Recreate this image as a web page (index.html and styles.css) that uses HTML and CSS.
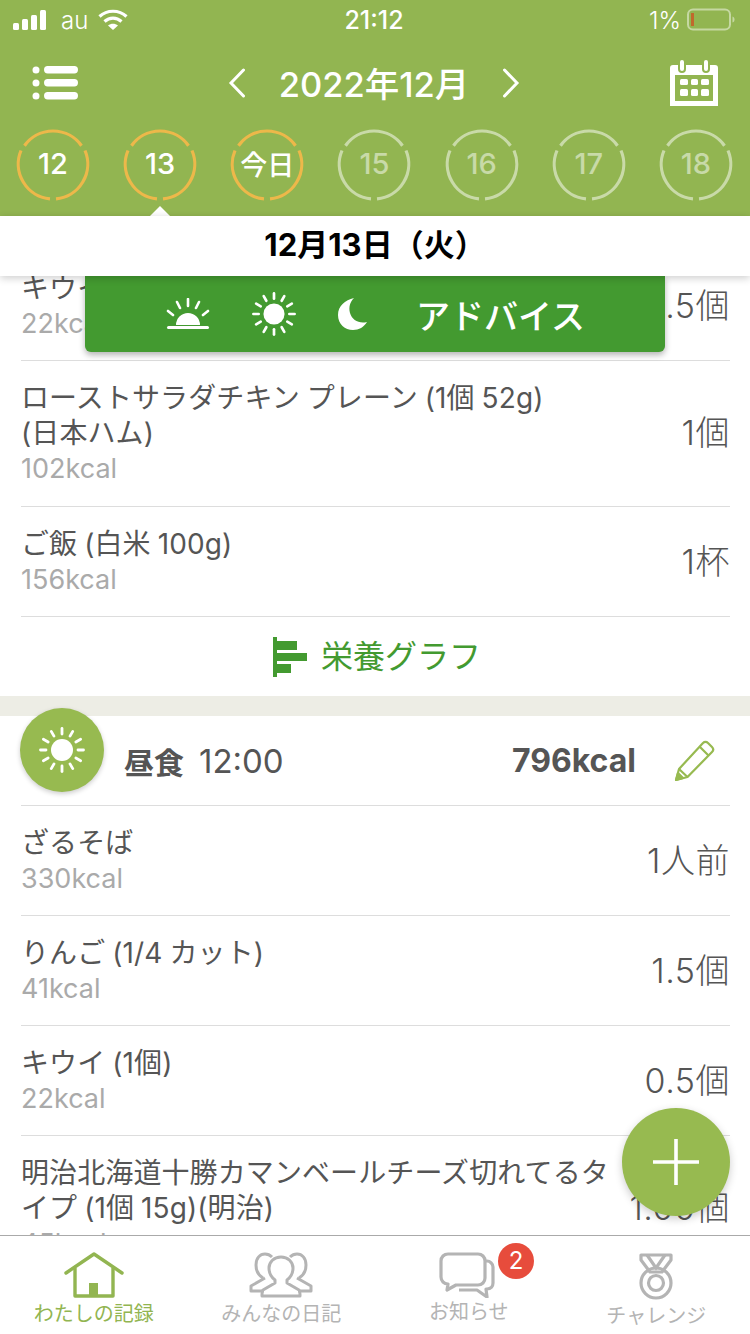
FILE: index.html
```html
<!DOCTYPE html>
<html lang="ja">
<head>
    <meta charset="UTF-8">
    <title>わたしの記録</title>
    <link rel="stylesheet" href="styles.css">
</head>
<body>
    <svg class="defs" width="0" height="0">
        <symbol id="ring" viewBox="0 0 76 76">
            <g fill="none" stroke="currentColor" stroke-width="3.200" stroke-linecap="butt">
                <path d="M41 72.900A35 35 0 0 0 70 24.500"/>
                <path d="M66.500 19.700A35 35 0 0 0 9.500 19.700"/>
                <path d="M6 24.500A35 35 0 0 0 35 72.900"/>
            </g>
        </symbol>
        <symbol id="sun" viewBox="0 0 48 48">
            <circle cx="24" cy="24" r="11" fill="currentColor"/>
            <g stroke="currentColor" stroke-width="2.800" stroke-linecap="round">
                <path d="M24 2.500V8"/>
                <path d="M24 2.500V8" transform="rotate(30 24 24)"/>
                <path d="M24 2.500V8" transform="rotate(60 24 24)"/>
                <path d="M24 2.500V8" transform="rotate(90 24 24)"/>
                <path d="M24 2.500V8" transform="rotate(120 24 24)"/>
                <path d="M24 2.500V8" transform="rotate(150 24 24)"/>
                <path d="M24 2.500V8" transform="rotate(180 24 24)"/>
                <path d="M24 2.500V8" transform="rotate(210 24 24)"/>
                <path d="M24 2.500V8" transform="rotate(240 24 24)"/>
                <path d="M24 2.500V8" transform="rotate(270 24 24)"/>
                <path d="M24 2.500V8" transform="rotate(300 24 24)"/>
                <path d="M24 2.500V8" transform="rotate(330 24 24)"/>
            </g>
        </symbol>
    </svg>

    <div class="page">
        <header class="top">
            <div class="status">
                <div class="status-left">
                    <svg class="signal" width="33" height="20" viewBox="0 0 33 20" fill="#fff">
                        <rect x="0" y="13" width="6" height="7" rx="1.500"/>
                        <rect x="9" y="9" width="6" height="11" rx="1.500"/>
                        <rect x="18" y="5" width="6" height="15" rx="1.500"/>
                        <rect x="27" y="0" width="6" height="20" rx="1.500"/>
                    </svg>
                    <span class="carrier">au</span>
                    <svg class="wifi" width="30" height="22" viewBox="0 0 30 22" fill="none" stroke="#fff" stroke-width="3.200">
                        <path d="M1.500 7.500C9 .5 21 .5 28.500 7.500"/>
                        <path d="M6.500 12.500c5-4.500 12-4.500 17 0"/>
                        <path d="M15 21l-5-4.600c3-2.300 7-2.300 10 0z" fill="#fff" stroke="none"/>
                    </svg>
                </div>
                <span class="clock">21:12</span>
                <div class="status-right">
                    <span>1%</span>
                    <svg width="48" height="24" viewBox="0 0 48 24" fill="none">
                        <rect x="1" y="1.500" width="42" height="20" rx="5" stroke="#c5d8a2" stroke-width="2"/>
                        <rect x="4" y="5" width="3" height="13" fill="#c0692c"/>
                        <path d="M45.500 8.500c1.500.5 2 1.500 2 3s-.5 2.500-2 3z" fill="#c5d8a2"/>
                    </svg>
                </div>
            </div>

            <div class="month-row">
                <svg class="menu" width="46" height="36" viewBox="0 0 46 36" fill="#fff">
                    <circle cx="4" cy="5" r="3.500"/>
                    <circle cx="4" cy="18" r="3.500"/>
                    <circle cx="4" cy="31" r="3.500"/>
                    <rect x="12" y="1" width="34" height="7.500" rx="3.700"/>
                    <rect x="12" y="14" width="34" height="7.500" rx="3.700"/>
                    <rect x="12" y="27" width="34" height="7.500" rx="3.700"/>
                </svg>
                <div class="month">
                    <svg width="18" height="30" viewBox="0 0 18 30" fill="none" stroke="#fff" stroke-width="3" stroke-linecap="round"><path d="M15.500 2L3 15l12.500 13"/></svg>
                    <span class="month-label">2022年12月</span>
                    <svg width="18" height="30" viewBox="0 0 18 30" fill="none" stroke="#fff" stroke-width="3" stroke-linecap="round"><path d="M2.500 2L15 15 2.500 28"/></svg>
                </div>
                <svg class="cal" width="48" height="46" viewBox="0 0 48 46" fill="#fff">
                    <path d="M3 5h5v4a4 4 0 0 0 8 0V5h16v4a4 4 0 0 0 8 0V5h5a3 3 0 0 1 3 3v38H0V8a3 3 0 0 1 3-3zM5 15v26h38V15z" fill-rule="evenodd"/>
                    <rect x="10" y="0" width="4" height="11" rx="2"/>
                    <rect x="34" y="0" width="4" height="11" rx="2"/>
                    <rect x="10" y="19" width="8" height="6" rx="1.500"/>
                    <rect x="21" y="19" width="7" height="6" rx="1.500"/>
                    <rect x="31" y="19" width="8" height="6" rx="1.500"/>
                    <rect x="10" y="29" width="8" height="7" rx="1.500"/>
                    <rect x="21" y="29" width="7" height="7" rx="1.500"/>
                    <rect x="31" y="29" width="8" height="7" rx="1.500"/>
                </svg>
            </div>

            <div class="days">
                <div class="day on"><svg class="ring"><use href="#ring"/></svg><span>12</span></div>
                <div class="day on current"><svg class="ring"><use href="#ring"/></svg><span>13</span></div>
                <div class="day on"><svg class="ring"><use href="#ring"/></svg><span class="today">今日</span></div>
                <div class="day"><svg class="ring"><use href="#ring"/></svg><span>15</span></div>
                <div class="day"><svg class="ring"><use href="#ring"/></svg><span>16</span></div>
                <div class="day"><svg class="ring"><use href="#ring"/></svg><span>17</span></div>
                <div class="day"><svg class="ring"><use href="#ring"/></svg><span>18</span></div>
            </div>
        </header>

        <div class="date-bar">12月13日（火）</div>

        <main class="scroll">
            <div class="advice">
                <svg width="46" height="32" viewBox="0 0 46 32" fill="#fff">
                    <path d="M11 27a12 12 0 0 1 24 0z"/>
                    <rect x="2" y="28" width="42" height="3" rx="1.500"/>
                    <g stroke="#fff" stroke-width="2.600" stroke-linecap="round">
                        <path d="M23 1v7M12 4l3 6M34 4l-3 6M3 13l5 4M43 13l-5 4"/>
                    </g>
                </svg>
                <svg class="advice-sun"><use href="#sun"/></svg>
                <svg width="32" height="34" viewBox="0 0 32 34" fill="#fff">
                    <path d="M17 1C8 3 1 9 1 18c0 9 7 15 15 15 6 0 11-3 14-8-8 2-15-2-17-9-1.500-6 0-11 4-15z"/>
                </svg>
                <span class="advice-label">アドバイス</span>
            </div>

            <div class="list list-top">
                <div class="row">
                    <div><div class="name">キウイ (1個)</div><div class="kcal">22kcal</div></div>
                    <div class="qty">0.5個</div>
                </div>
                <div class="row tall">
                    <div><div class="name">ローストサラダチキン プレーン (1個 52g)<br>(日本ハム)</div><div class="kcal">102kcal</div></div>
                    <div class="qty">1個</div>
                </div>
                <div class="row">
                    <div><div class="name">ご飯 (白米 100g)</div><div class="kcal">156kcal</div></div>
                    <div class="qty">1杯</div>
                </div>
                <div class="graph-link">
                    <svg width="34" height="40" viewBox="0 0 34 40" fill="#439a30">
                        <rect x="0" y="0" width="4" height="40"/>
                        <rect x="4" y="4" width="20" height="9"/>
                        <rect x="4" y="16" width="30" height="8"/>
                        <rect x="4" y="27" width="14" height="9"/>
                    </svg>
                    <span>栄養グラフ</span>
                </div>
            </div>

            <div class="band"></div>

            <section class="meal">
                <div class="meal-icon"><svg class="meal-sun"><use href="#sun"/></svg></div>
                <div class="meal-head">
                    <div class="meal-title"><b>昼食</b><span>12:00</span></div>
                    <div class="meal-total">
                        <b>796kcal</b>
                        <svg width="42" height="42" viewBox="0 0 42 42" fill="none" stroke="#97ba50" stroke-width="2.200" stroke-linejoin="round">
                            <path d="M2 40l3-11L29 3c1.500-1.500 3.500-1.500 5 0l4 4c1.500 1.500 1.500 3.500 0 5L13.500 37z"/>
                            <path d="M5 29l8.500 8M25.500 6.500l9 9"/>
                            <path d="M2 40l2-7 5 5z" fill="#97ba50"/>
                        </svg>
                    </div>
                </div>
                <div class="list">
                    <div class="row">
                        <div><div class="name">ざるそば</div><div class="kcal">330kcal</div></div>
                        <div class="qty">1人前</div>
                    </div>
                    <div class="row">
                        <div><div class="name">りんご (1/4 カット)</div><div class="kcal">41kcal</div></div>
                        <div class="qty">1.5個</div>
                    </div>
                    <div class="row">
                        <div><div class="name">キウイ (1個)</div><div class="kcal">22kcal</div></div>
                        <div class="qty">0.5個</div>
                    </div>
                    <div class="row tall">
                        <div><div class="name">明治北海道十勝カマンベールチーズ切れてるタ<br>イプ (1個 15g)(明治)</div><div class="kcal">45kcal</div></div>
                        <div class="qty">1.00個</div>
                    </div>
                </div>
            </section>
        </main>

        <nav class="tabs">
            <div class="tab active">
                <svg width="60" height="46" viewBox="0 0 60 46" fill="none" stroke="#92b551" stroke-width="3.400" stroke-linejoin="round">
                    <path d="M2 21L30 2l28 19" stroke-linecap="round"/>
                    <path d="M11 16v28h38V16"/>
                    <rect x="25" y="31" width="9" height="13" fill="#92b551" stroke="none"/>
                </svg>
                <span>わたしの記録</span>
            </div>
            <div class="tab">
                <svg width="64" height="46" viewBox="0 0 64 46" fill="none" stroke="#b4b4b4" stroke-width="3" stroke-linejoin="round">
                    <path d="M14 26c-5-3-7-8-7-13C7 6 11 2 16 2c3 0 5 1 7 3"/>
                    <path d="M16 26L2 34v5h13"/>
                    <path d="M50 26c5-3 7-8 7-13 0-7-4-11-9-11-3 0-5 1-7 3"/>
                    <path d="M48 26l14 8v5H49"/>
                    <path d="M26 28c-4-3-6-7-6-12 0-6 5-11 12-11s12 5 12 11c0 5-2 9-6 12v3l12 7c1 1 1 3 1 6H13c0-3 0-5 1-6l12-7z"/>
                </svg>
                <span>みんなの日記</span>
            </div>
            <div class="tab news">
                <svg width="56" height="46" viewBox="0 0 56 46" fill="none" stroke="#b4b4b4" stroke-width="3.200" stroke-linejoin="round">
                    <path d="M9 2h30c4 0 7 3 7 7v17c0 4-3 7-7 7H17L8 38l1-6c-4 0-7-3-7-7V9c0-4 3-7 7-7z"/>
                    <path d="M46 9h2c3 0 6 3 6 6v16c0 3-2 6-6 6h-1l1 8-10-7H20"/>
                </svg>
                <span>お知らせ</span>
                <span class="badge">2</span>
            </div>
            <div class="tab">
                <svg width="34" height="48" viewBox="0 0 34 48" fill="none" stroke="#b4b4b4" stroke-width="3.200">
                    <path d="M2 3h30v5L23 20H11L2 8z" stroke-linejoin="round"/>
                    <path d="M8 3l9 13 9-13"/>
                    <circle cx="17" cy="31" r="15"/>
                    <circle cx="17" cy="31" r="7.500"/>
                </svg>
                <span>チャレンジ</span>
            </div>
        </nav>

        <div class="fab">
            <svg width="46" height="46" viewBox="0 0 46 46" stroke="#fff" stroke-width="3.600"><path d="M23 0v46M0 23h46"/></svg>
        </div>
    </div>
</body>
</html>
```

FILE: styles.css
```css
* {
    box-sizing: border-box;
}

body {
    margin: 0;
    font-family: "Inter", "Noto Sans CJK JP", sans-serif;
    background-color: #fff;
    color: #555;
}

.defs {
    display: block;
    height: 0;
}

.page {
    position: relative;
    width: 750px;
    height: 1334px;
    display: flex;
    flex-direction: column;
    overflow: hidden;
}

/* header */
.top {
    height: 216px;
    flex: none;
    background-color: #92b551;
    color: #fff;
}

.status {
    height: 40px;
    padding: 0 15px 0 13px;
    display: grid;
    grid-template-columns: 1fr auto 1fr;
    align-items: center;
    font-size: 24px;
}

.status-left {
    display: flex;
    align-items: center;
}

.carrier {
    margin-left: 15px;
    margin-right: 10px;
    font-weight: 300;
}

.clock {
    font-weight: 500;
    font-size: 25px;
}

.status-right {
    display: flex;
    justify-content: flex-end;
    align-items: center;
    gap: 6px;
    font-weight: 300;
}

.month-row {
    height: 74px;
    padding: 12px 32px 0;
    display: flex;
    justify-content: space-between;
    align-items: center;
}

.month {
    display: flex;
    align-items: center;
    gap: 33px;
}

.month-label {
    font-size: 34.500px;
    font-weight: 500;
    white-space: nowrap;
    margin-bottom: 2px;
}

.days {
    display: grid;
    grid-template-columns: repeat(7, 72px);
    justify-content: space-between;
    padding: 14px 18px 0 17px;
}

.day {
    position: relative;
    width: 72px;
    height: 72px;
    display: flex;
    align-items: center;
    justify-content: center;
    font-size: 29px;
    font-weight: 500;
    color: rgba(255, 255, 255, 0.5);
}

.day span {
    margin-bottom: 2px;
}

.day.on {
    color: #fff;
}

.ring {
    position: absolute;
    left: -2px;
    top: -2px;
    width: 76px;
    height: 76px;
    color: rgba(255, 255, 255, 0.5);
}

.day.on .ring {
    color: #edb84a;
}

.today {
    font-size: 27px;
}

.day.current::after {
    content: "";
    position: absolute;
    left: 26px;
    bottom: -16px;
    border-left: 10px solid transparent;
    border-right: 10px solid transparent;
    border-bottom: 10px solid #fff;
}

.date-bar {
    height: 60px;
    flex: none;
    position: relative;
    z-index: 3;
    padding-bottom: 8px;
    background-color: #fff;
    color: #000;
    font-size: 31px;
    font-weight: 700;
    display: flex;
    align-items: center;
    justify-content: center;
    box-shadow: 0 2px 8px rgba(0, 0, 0, 0.2);
}

/* list */
.scroll {
    flex: 1;
    position: relative;
    overflow: hidden;
}

.list {
    padding: 0 20px 0 21px;
}

.list-top {
    margin-top: -25px;
}

.row {
    display: flex;
    justify-content: space-between;
    align-items: center;
    padding: 20px 0 19px;
    border-bottom: 1px solid #ddd;
    white-space: nowrap;
}

.row.tall {
    padding-bottom: 20px;
}

.name {
    font-size: 28px;
    line-height: 35px;
    letter-spacing: 0.1px;
    word-spacing: -1px;
}

.kcal {
    font-size: 27px;
    line-height: 35px;
    color: #aaa;
}

.qty {
    font-size: 34px;
    font-weight: 300;
    letter-spacing: 0.5px;
    margin-bottom: 6px;
}

.graph-link {
    height: 79px;
    padding-left: 3px;
    display: flex;
    align-items: center;
    justify-content: center;
    gap: 14px;
    color: #439a30;
    font-size: 32px;
}

.graph-link span {
    margin-bottom: 5px;
}

.band {
    height: 20px;
    background-color: #edede5;
}

/* meal */
.meal {
    position: relative;
}

.meal-icon {
    position: absolute;
    left: 20px;
    top: -8px;
    width: 84px;
    height: 84px;
    border-radius: 50%;
    background-color: #97ba50;
    box-shadow: 0 2px 5px rgba(0, 0, 0, 0.2);
    display: flex;
    align-items: center;
    justify-content: center;
    color: #fff;
}

.meal-sun {
    width: 48px;
    height: 48px;
}

.meal-head {
    height: 90px;
    margin: 0 20px 0 21px;
    padding: 0 14px 0 103px;
    display: flex;
    justify-content: space-between;
    align-items: center;
    border-bottom: 1px solid #ddd;
}

.meal-title {
    display: flex;
    align-items: center;
    gap: 15px;
    font-size: 33px;
}

.meal-title b {
    font-size: 30px;
    font-weight: 700;
}

.meal-total {
    display: flex;
    align-items: center;
    gap: 38px;
    font-size: 32px;
}

.meal-total b {
    font-weight: 700;
}

/* advice */
.advice {
    position: absolute;
    z-index: 2;
    left: 85px;
    top: 0;
    width: 580px;
    height: 76px;
    padding: 0 0 0 80px;
    display: flex;
    align-items: center;
    background-color: #439a30;
    border-radius: 0 0 6px 6px;
    box-shadow: 0 3px 6px rgba(0, 0, 0, 0.3);
    color: #fff;
}

.advice-sun {
    width: 46px;
    height: 46px;
    margin-left: 40px;
    margin-right: 40px;
}

.advice-label {
    margin-left: 47px;
    font-size: 34px;
    font-weight: 500;
    white-space: nowrap;
}

/* tabs */
.tabs {
    height: 99px;
    flex: none;
    display: grid;
    grid-template-columns: repeat(4, 1fr);
    border-top: 1px solid #aaa;
    background-color: #fff;
    position: relative;
    z-index: 1;
}

.tab {
    position: relative;
    display: flex;
    flex-direction: column;
    align-items: center;
    padding-top: 16px;
    font-size: 20px;
    color: #b4b4b4;
}

.tab span {
    margin-top: 2px;
    line-height: 28px;
}

.tab.news svg {
    margin-right: 4px;
}

.tab.news span {
    margin-top: 0;
}

.tab.active {
    color: #92b551;
}

.tab .badge {
    position: absolute;
    left: 123px;
    top: 7px;
    width: 36px;
    height: 36px;
    margin: 0;
    border-radius: 50%;
    background-color: #e74c3c;
    color: #fff;
    font-size: 24px;
    line-height: 36px;
    text-align: center;
}

.fab {
    position: absolute;
    z-index: 4;
    left: 622px;
    top: 1108px;
    width: 108px;
    height: 108px;
    border-radius: 50%;
    background-color: #97ba50;
    box-shadow: 0 3px 8px rgba(0, 0, 0, 0.2);
    display: flex;
    align-items: center;
    justify-content: center;
}
```
